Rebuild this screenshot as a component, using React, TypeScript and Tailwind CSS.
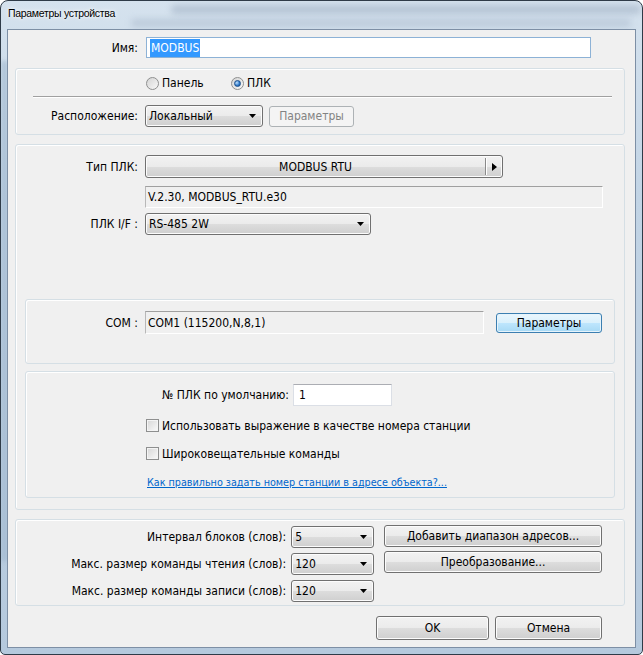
import React from 'react';

const btnCls =
  'flex items-center justify-center rounded-[3px] border border-[#707070] bg-[linear-gradient(180deg,#f2f2f2_0%,#ebebeb_50%,#dddddd_50%,#cfcfcf_100%)] shadow-[inset_0_0_0_1px_#fcfcfc]';

const Btn = ({ className = '', children }: { className?: string; children: React.ReactNode }) => (
  <div className={`${btnCls} ${className}`}>{children}</div>
);

const Arrow = () => (
  <svg width="7" height="4" viewBox="0 0 7 4" className="shrink-0">
    <path d="M0 0h7L3.5 4z" fill="#000" />
  </svg>
);

const Combo = ({ className = '', value }: { className?: string; value: string }) => (
  <div className={`${btnCls} !justify-between pl-[3px] pr-[6px] ${className}`}>
    <span>{value}</span>
    <Arrow />
  </div>
);

const ReadOnly = ({ className = '', value }: { className?: string; value: string }) => (
  <div
    className={`flex items-center border-t border-l border-t-[#a0a0a0] border-l-[#b8b8b8] border-b border-r border-b-white border-r-white bg-[#f0f0f0] pl-[2px] ${className}`}
  >
    {value}
  </div>
);

const Group = ({ className = '', children }: { className?: string; children?: React.ReactNode }) => (
  <div className={`rounded-[3px] border border-[#d5dfe5] shadow-[inset_1px_1px_0_#fff] ${className}`}>
    {children}
  </div>
);

const Radio = ({ checked }: { checked?: boolean }) => (
  <div className="flex h-[13px] w-[13px] items-center justify-center rounded-full border border-[#8e8f8f] bg-[linear-gradient(135deg,#d4d4d4,#f8f8f8)]">
    {checked && (
      <div className="h-[7px] w-[7px] rounded-full border border-[#1a4f8c] bg-[radial-gradient(circle_at_35%_35%,#bfe1ff,#2c77c9_60%,#174c8a)]" />
    )}
  </div>
);

const Check = () => (
  <div className="h-[13px] w-[13px] border border-[#8e8f8f] bg-[linear-gradient(135deg,#d6d6d6,#fafafa)] shadow-[inset_0_0_0_1px_#f4f4f4]" />
);

export default function App() {
  return (
    <div className="relative flex h-[655px] w-[643px] flex-col overflow-hidden rounded-t-[8px] rounded-b-[5px] border border-[#2f3b48] bg-[linear-gradient(180deg,#d5e2ee_0%,#c2d4e5_30%,#b5c9dd_100%)] px-[6px] pb-[6px] font-['DejaVu_Sans_Condensed','Liberation_Sans',sans-serif] text-[12px] text-black">
      {/* blurred glass behind title */}
      <div className="absolute left-[170px] top-[4px] h-[9px] w-[470px] rounded-full bg-[#8a9cb2]/40 blur-[3px]" />
      <div className="absolute left-[130px] top-[18px] h-[8px] w-[500px] rounded-full bg-[#8a9cb2]/30 blur-[3px]" />
      <div className="absolute left-0 top-[60px] h-[500px] w-[7px] bg-[#9fb6cd]/60 blur-[2px]" />

      <div className="relative flex h-[28px] items-center pl-[1px] pb-[3px] font-['Liberation_Sans',sans-serif] text-[10.5px] tracking-[-0.3px] [text-shadow:0_0_6px_#fff,0_0_3px_#fff]">
        Параметры устройства
      </div>

      <div className="relative flex flex-1 flex-col border border-[#7d8fa5] bg-[#f0f0f0]">
        {/* Name */}
        <div className="mt-[7px] flex h-[21px] items-center">
          <div className="w-[130px] text-right">Имя:</div>
          <div className="ml-[8px] flex h-[21px] w-[445px] items-center border border-[#8db2d6] bg-white pl-[3px]">
            <span className="bg-[#3399ff] px-[1px] text-white">MODBUS</span>
          </div>
        </div>

        {/* Group 1 */}
        <Group className="ml-[7px] mt-[10px] h-[67px] w-[610px]">
          <div className="mt-[6px] flex h-[16px] items-center pl-[130px]">
            <div className="flex w-[85px] items-center gap-[3px]">
              <Radio />
              <span>Панель</span>
            </div>
            <div className="flex items-center gap-[3px]">
              <Radio checked />
              <span>ПЛК</span>
            </div>
          </div>
          <div className="ml-[17px] mt-[5px] h-0 w-[579px] border-t border-b border-t-[#a0a0a0] border-b-white" />
          <div className="mt-[7px] flex h-[22px] items-center">
            <div className="w-[122px] text-right">Расположение:</div>
            <Combo className="ml-[7px] h-[22px] w-[118px]" value="Локальный" />
            <div className="ml-[6px] flex h-[21px] w-[85px] items-center justify-center rounded-[3px] border border-[#adb2b5] bg-[#f4f4f4] text-[#838383]">
              Параметры
            </div>
          </div>
        </Group>

        {/* Group 2 */}
        <Group className="ml-[7px] mt-[9px] flex h-[366px] w-[610px] flex-col">
          <div className="mt-[10px] flex h-[23px] items-center">
            <div className="w-[122px] text-right">Тип ПЛК:</div>
            <Btn className="ml-[7px] h-[23px] w-[358px] !justify-start">
              <div className="flex-1 text-center">MODBUS RTU</div>
              <div className="h-[17px] w-0 border-l border-r border-l-[#8a8a8a] border-r-white" />
              <div className="flex w-[15px] justify-center">
                <svg width="5" height="8" viewBox="0 0 5 8">
                  <path d="M0 0l5 4-5 4z" fill="#000" />
                </svg>
              </div>
            </Btn>
          </div>
          <ReadOnly className="ml-[129px] mt-[8px] h-[22px] w-[458px]" value="V.2.30, MODBUS_RTU.e30" />
          <div className="mt-[5px] flex h-[22px] items-center">
            <div className="w-[122px] text-right">ПЛК I/F :</div>
            <Combo className="ml-[7px] h-[22px] w-[226px]" value="RS-485 2W" />
          </div>

          <Group className="ml-[9px] mt-[64px] h-[65px] w-[590px]">
            <div className="mt-[11px] flex h-[23px] items-center">
              <div className="w-[112px] text-right">COM :</div>
              <ReadOnly className="ml-[7px] h-[23px] w-[339px]" value="COM1 (115200,N,8,1)" />
              <div className="ml-[12px] flex h-[20px] w-[106px] items-center justify-center rounded-[3px] border border-[#3c7fb1] bg-[linear-gradient(180deg,#eaf6fd_0%,#d9f0fc_50%,#bee6fd_50%,#a7d9f5_100%)] shadow-[inset_0_0_0_1px_#e6f4fc]">
                Параметры
              </div>
            </div>
          </Group>

          <Group className="ml-[9px] mt-[7px] h-[127px] w-[590px]">
            <div className="mt-[12px] flex h-[22px] items-center">
              <div className="w-[263px] text-right">№ ПЛК по умолчанию:</div>
              <div className="ml-[4px] flex h-[22px] w-[99px] items-center border border-[#dbdfe6] border-t-[#abadb3] bg-white pl-[5px]">
                1
              </div>
            </div>
            <div className="ml-[120px] mt-[13px] flex h-[13px] items-center gap-[3px]">
              <Check />
              <span>Использовать выражение в качестве номера станции</span>
            </div>
            <div className="ml-[120px] mt-[15px] flex h-[13px] items-center gap-[3px]">
              <Check />
              <span>Широковещательные команды</span>
            </div>
            <div className="ml-[121px] mt-[16px] h-[13px] text-[10.7px] leading-[13px] text-[#0066cc] underline">
              Как правильно задать номер станции в адресе объекта?...
            </div>
          </Group>
        </Group>

        {/* Group 3 */}
        <Group className="ml-[7px] mt-[9px] flex h-[87px] w-[610px]">
          <div className="flex w-[358px] flex-col">
            <div className="mt-[6px] flex h-[22px] items-center">
              <div className="w-[271px] text-right">Интервал блоков (слов):</div>
              <Combo className="ml-[5px] h-[22px] w-[83px]" value="5" />
            </div>
            <div className="mt-[5px] flex h-[22px] items-center">
              <div className="w-[271px] text-right">Макс. размер команды чтения (слов):</div>
              <Combo className="ml-[5px] h-[22px] w-[83px]" value="120" />
            </div>
            <div className="mt-[5px] flex h-[22px] items-center">
              <div className="w-[271px] text-right">Макс. размер команды записи (слов):</div>
              <Combo className="ml-[5px] h-[22px] w-[83px]" value="120" />
            </div>
          </div>
          <div className="ml-[10px] flex flex-col">
            <Btn className="mt-[5px] h-[22px] w-[218px]">Добавить диапазон адресов...</Btn>
            <Btn className="mt-[4px] h-[22px] w-[218px]">Преобразование...</Btn>
          </div>
        </Group>

        {/* OK / Cancel */}
        <div className="mt-[10px] flex">
          <Btn className="ml-[368px] h-[24px] w-[113px]">OK</Btn>
          <Btn className="ml-[6px] h-[24px] w-[107px]">Отмена</Btn>
        </div>
      </div>
    </div>
  );
}
